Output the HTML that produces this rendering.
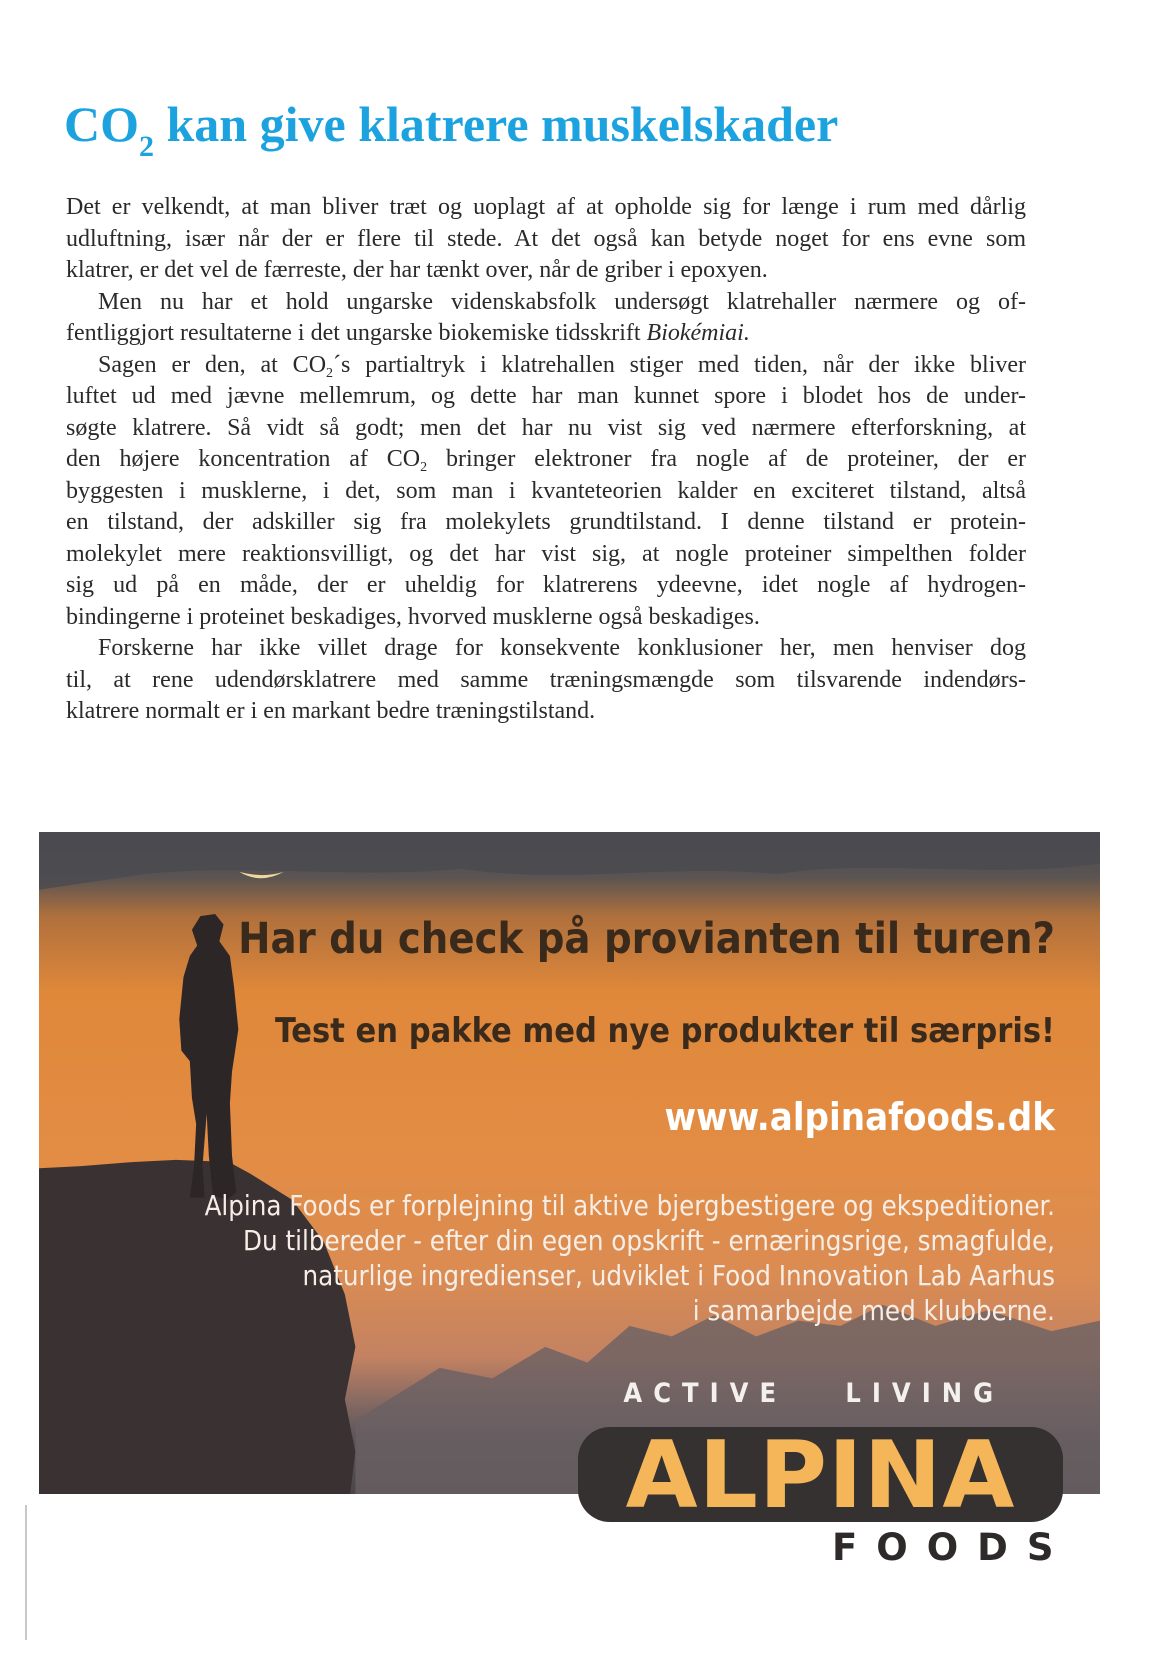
<!DOCTYPE html>
<html><head><meta charset="utf-8"><style>
body{margin:0;background:#fff;width:1167px;height:1653px;position:relative;overflow:hidden}
.t{position:absolute;left:64px;top:94px;font:bold 50px/60px "Liberation Serif",serif;color:#1ca3df;white-space:nowrap}
.t sub{font-size:30px;vertical-align:-15px;line-height:0}
.body{position:absolute;left:66px;top:192px;width:960px;font:24px/31.5px "Liberation Serif",serif;color:#2a2a2a}
.body div{text-align:justify;text-align-last:justify;white-space:nowrap}
.body div.l{text-align-last:left}
.body div.i{text-indent:32px}
.body sub{font-size:14px;line-height:0;vertical-align:-5px}
.ad{position:absolute;left:39px;top:832px;width:1061px;height:662px;overflow:hidden;
background:linear-gradient(180deg,#4a4a4e 0px,#5a5452 45px,#b0703c 85px,#df883a 160px,#e38c44 320px,#db8c52 440px,#c38262 525px,#866a62 570px,#585357 610px,#4a474b 662px)}
.n{font-family:"DejaVu Sans Condensed","DejaVu Sans",sans-serif;position:absolute;right:45px;white-space:nowrap;text-align:right;line-height:1}
</style></head><body>
<div class="t">CO<sub>2</sub> kan give klatrere muskelskader</div>
<div class="body">
<div>Det er velkendt, at man bliver træt og uoplagt af at opholde sig for længe i rum med dårlig</div>
<div>udluftning, især når der er flere til stede. At det også kan betyde noget for ens evne som</div>
<div class="l">klatrer, er det vel de færreste, der har tænkt over, når de griber i epoxyen.</div>
<div class="i">Men nu har et hold ungarske videnskabsfolk undersøgt klatrehaller nærmere og of-</div>
<div class="l">fentliggjort resultaterne i det ungarske biokemiske tidsskrift <i>Biokémiai.</i></div>
<div class="i">Sagen er den, at CO<sub>2</sub>´s partialtryk i klatrehallen stiger med tiden, når der ikke bliver</div>
<div>luftet ud med jævne mellemrum, og dette har man kunnet spore i blodet hos de under-</div>
<div>søgte klatrere. Så vidt så godt; men det har nu vist sig ved nærmere efterforskning, at</div>
<div>den højere koncentration af CO<sub>2</sub> bringer elektroner fra nogle af de proteiner, der er</div>
<div>byggesten i musklerne, i det, som man i kvanteteorien kalder en exciteret tilstand, altså</div>
<div>en tilstand, der adskiller sig fra molekylets grundtilstand. I denne tilstand er protein-</div>
<div>molekylet mere reaktionsvilligt, og det har vist sig, at nogle proteiner simpelthen folder</div>
<div>sig ud på en måde, der er uheldig for klatrerens ydeevne, idet nogle af hydrogen-</div>
<div class="l">bindingerne i proteinet beskadiges, hvorved musklerne også beskadiges.</div>
<div class="i">Forskerne har ikke villet drage for konsekvente konklusioner her, men henviser dog</div>
<div>til, at rene udendørsklatrere med samme træningsmængde som tilsvarende indendørs-</div>
<div class="l">klatrere normalt er i en markant bedre træningstilstand.</div>
</div>
<div class="ad">
<svg width="1061" height="662" viewBox="0 0 1006 630" preserveAspectRatio="none" style="position:absolute;left:0;top:0">
<path d="M0 0H1006V30C900 45 800 25 700 40C600 30 500 50 400 35C300 45 200 30 100 40L0 55Z" fill="#4a4a50" opacity=".8"/>
<path d="M190 38Q210 50 232 38Q212 44 190 38Z" fill="#f0d8a0"/>
<path d="M300 560L380 510 430 520 480 490 520 505 560 470 600 480 640 460 680 480 720 465 760 470 800 450 850 470 900 455 960 475 1006 465V630H300Z" fill="#6a6064" opacity=".8"/>
<path d="M0 320L40 318 90 314 130 312 180 314 200 325 240 350 270 390 290 440 300 490 290 540 300 590 295 630H0Z" fill="#3a3232"/>
<g transform="translate(-15,18)"><path d="M158 330L162 300 164 260 160 235 158 200 150 190 148 160 152 120 158 100 165 90 160 75 168 62 182 60 190 70 186 86 196 100 200 130 204 170 198 210 196 240 198 290 202 325 194 332 180 328 176 290 174 250 170 300 172 330Z" fill="#2d2627"/></g>
</svg>
<div class="n" style="top:86px;font-size:43px;font-weight:bold;color:#3a2a1c">Har du check på provianten til turen?</div>
<div class="n" style="top:182px;font-size:34px;font-weight:bold;color:#3a2a1c">Test en pakke med nye produkter til særpris!</div>
<div class="n" style="top:266px;font-size:38px;font-weight:bold;color:#fff">www.alpinafoods.dk</div>
<div class="n" style="top:357px;font-size:27.4px;line-height:35px;color:#f6eee6">Alpina Foods er forplejning til aktive bjergbestigere og ekspeditioner.<br>Du tilbereder - efter din egen opskrift - ernæringsrige, smagfulde,<br>naturlige ingredienser, udviklet i Food Innovation Lab Aarhus<br>i samarbejde med klubberne.</div>
<div class="n" style="top:548px;right:96px;font-size:27px;font-weight:bold;letter-spacing:11px;color:#f4f0ee">ACTIVE&nbsp;&nbsp;&nbsp;LIVING</div>
</div>
<div style="position:absolute;left:578px;top:1427px;width:485px;height:95px;background:#353130;border-radius:32px"></div>
<div style="position:absolute;left:578px;top:1429px;width:485px;text-align:center;font:bold 93px/1 'DejaVu Sans',sans-serif;color:#f4b658;letter-spacing:1px">ALPINA</div>
<div style="position:absolute;left:832px;top:1529px;font:bold 37px/1 'DejaVu Sans',sans-serif;color:#2e2a2a;letter-spacing:19px">FOODS</div>
<div style="position:absolute;left:25px;top:1505px;width:2px;height:135px;background:#c8c8c8"></div>
</body></html>
